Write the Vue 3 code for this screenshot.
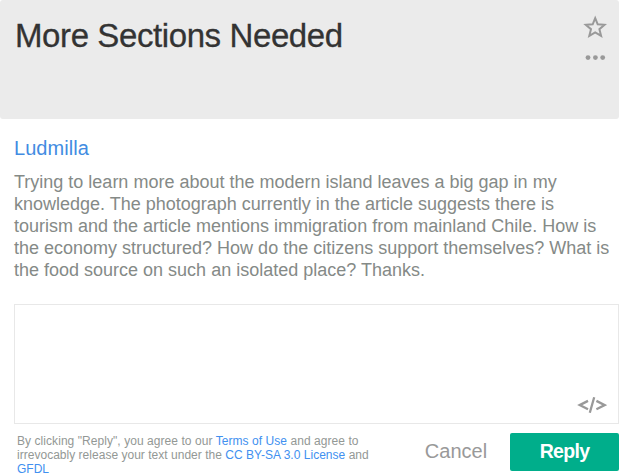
<script setup>
const lines = [
  'Trying to learn more about the modern island leaves a big gap in my',
  'knowledge. The photograph currently in the article suggests there is',
  'tourism and the article mentions immigration from mainland Chile. How is',
  'the economy structured? How do the citizens support themselves? What is',
  'the food source on such an isolated place? Thanks.',
]
</script>

<template>
  <main class="topic">
    <header class="head">
      <h1><span>More Sections Needed</span></h1>
      <div class="tools">
        <svg class="star" width="24" height="24" viewBox="0 0 24 24">
          <path d="M12.2 3.1 14.7 9.3 21.6 9.8 16.4 14.2 18.1 20.8 12.2 17.3 6.3 20.8 8 14.2 2.8 9.8 9.7 9.3Z" />
        </svg>
        <svg class="dots" width="24" height="8" viewBox="0 0 24 8">
          <circle cx="5" cy="3.6" r="2.4" /><circle cx="12.4" cy="3.6" r="2.4" /><circle cx="19.7" cy="3.6" r="2.4" />
        </svg>
      </div>
    </header>
    <a class="author">Ludmilla</a>
    <p class="post"><span v-for="line in lines" :key="line">{{ line }}</span></p>
    <section class="editor">
      <svg width="30" height="18" viewBox="0 0 30 18">
        <path d="M11 4.9 2.7 9.1 11 13.3M19.4 4.9 27.8 9.1 19.4 13.3M17.2 1.2 12.8 16.8" />
      </svg>
    </section>
    <footer class="foot">
      <p class="legal">
        <span class="agree">By clicking "Reply", you agree to our <a>Terms of Use</a> and agree to</span>
        <span class="release">irrevocably release your text under the <a>CC BY-SA 3.0 License</a> and</span>
        <span><a>GFDL</a></span>
      </p>
      <button class="cancel">Cancel</button>
      <button class="reply">Reply</button>
    </footer>
  </main>
</template>

<style>
body { margin: 0; background: #fff; overflow: hidden; }
</style>

<style scoped>
.topic { width: 619px; height: 474px; overflow: hidden; font-family: "Liberation Sans", Arial, sans-serif; display: flex; flex-direction: column; }
.head { height: 119px; box-sizing: border-box; flex: none; background: #ebebeb; border-radius: 3px; display: flex; justify-content: space-between; padding: 15px 12px 0 15px; }
h1 { margin: 0; font-size: 33px; line-height: 42px; font-weight: 400; color: #333; letter-spacing: -0.4px; white-space: nowrap; -webkit-text-stroke: 0.3px #333; }
.tools { display: flex; flex-direction: column; }
.star { fill: none; stroke: #999; stroke-width: 2; }
.dots { fill: #999; margin-top: 15px; }
.author { margin: 17px 0 0 14px; font-size: 20px; line-height: 24px; color: #428ce2; white-space: nowrap; align-self: flex-start; letter-spacing: 0.05px; }
.post { margin: 11px 0 0 14px; font-size: 18px; line-height: 22px; color: #858a87; white-space: nowrap; }
.post span { display: block; width: max-content; }
.editor { margin: 23px 0 0 14px; width: 605px; height: 120px; flex: none; box-sizing: border-box; border: 1px solid #e8e8e8; display: flex; justify-content: flex-end; align-items: flex-end; padding: 0 11px 9px 0; }
.editor svg { fill: none; stroke: #999; stroke-width: 2.3; }
.foot { margin-top: 9px; display: flex; align-items: flex-start; }
.legal { margin: 1px 0 0 17px; width: 396px; flex: none; font-size: 12px; line-height: 14px; color: #939895; white-space: nowrap; }
.legal span { display: block; width: max-content; }
.agree { letter-spacing: 0.06px; }
.release { letter-spacing: 0.02px; }
.legal a { color: #4190f0; }
button { border: 0; padding: 0; font-family: inherit; font-size: 20px; height: 38px; line-height: 36px; }
.cancel { background: none; width: 86px; color: #999; padding-bottom: 2px; }
.reply { margin-left: 11px; width: 109px; background: #00ae8b; color: #fff; font-weight: 700; border-radius: 2px; font-size: 19.5px; letter-spacing: -0.7px; padding-bottom: 2px; }
</style>
